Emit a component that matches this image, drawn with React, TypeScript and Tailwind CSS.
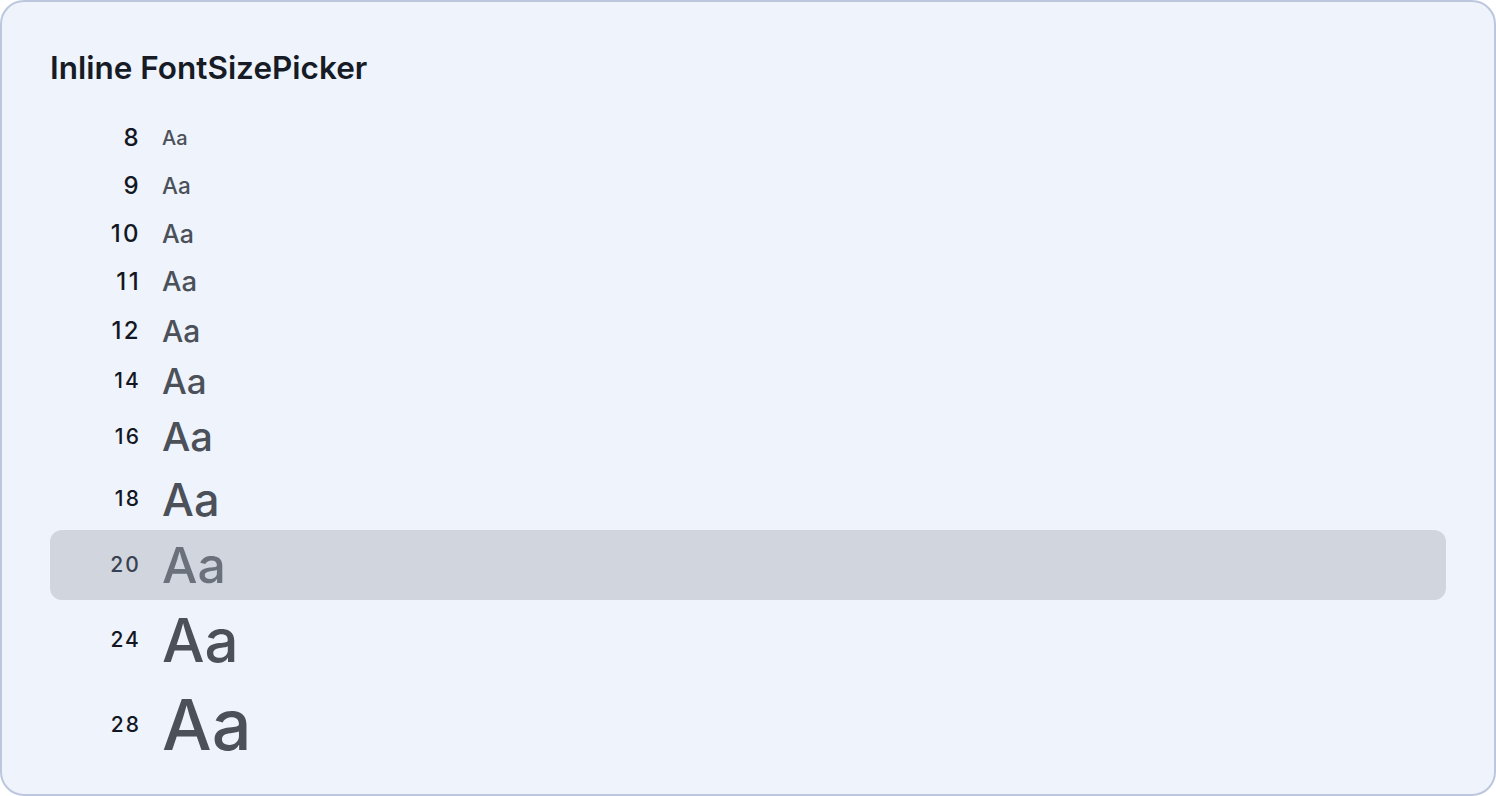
const sizes = [
  { size: 8, row: "h-[48px]", aa: "text-[20px]", label: "text-[24px]" },
  { size: 9, row: "h-[48px]", aa: "text-[22.5px]", label: "text-[24px]" },
  { size: 10, row: "h-[48px]", aa: "text-[25px]", label: "text-[24px]" },
  { size: 11, row: "h-[48px]", aa: "text-[27.5px]", label: "text-[24px]" },
  { size: 12, row: "h-[50px]", aa: "text-[30px]", label: "text-[24px]" },
  { size: 14, row: "h-[50px]", aa: "text-[35px]", label: "text-[21px]" },
  { size: 16, row: "h-[62px]", aa: "text-[40px]", label: "text-[21px]" },
  { size: 18, row: "h-[62px]", aa: "text-[45px]", label: "text-[21px]" },
  { size: 20, row: "h-[70px]", aa: "text-[50px]", label: "text-[21px]" },
  { size: 24, row: "h-[80px]", aa: "text-[60px]", label: "text-[21px]" },
  { size: 28, row: "h-[90px]", aa: "text-[70px]", label: "text-[21px]" },
];

const selected = 20;

export default function App() {
  return (
    <div
      className="h-[796px] w-[1496px] overflow-hidden bg-white"
      style={{ fontFamily: "Inter, 'Noto Sans', sans-serif" }}
    >
      <div className="h-full w-full rounded-[24px] border-2 border-[#bcc7de] bg-[#eef3fc] px-[48px] pt-[46px]">
        <h1 className="text-[31.5px] font-semibold leading-[40px] text-[#161b26]">
          Inline FontSizePicker
        </h1>
        <div className="mt-[26px] flex flex-col">
          {sizes.map((s) => {
            const active = s.size === selected;
            return (
              <div
                key={s.size}
                className={`flex items-center rounded-[12px] ${s.row} ${
                  active ? "bg-[#d1d5dd]" : ""
                }`}
              >
                <span
                  className={`w-[91px] text-right font-medium tracking-[0.1em] ${s.label} ${
                    active ? "text-[#374151]" : "text-[#131722]"
                  }`}
                >
                  {s.size}
                </span>
                <span
                  className={`ml-[21px] font-medium leading-none ${s.aa} ${
                    active ? "text-[#6b717b]" : "text-[#4b5059]"
                  }`}
                >
                  Aa
                </span>
              </div>
            );
          })}
        </div>
      </div>
    </div>
  );
}
